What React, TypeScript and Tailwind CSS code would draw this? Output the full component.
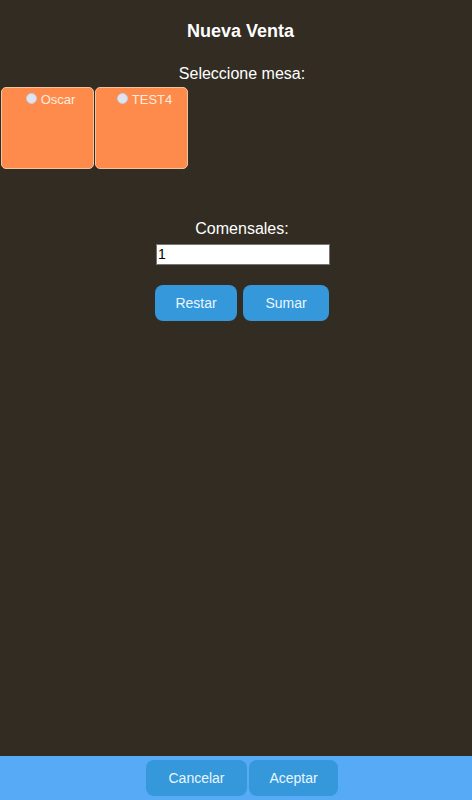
import { useState } from "react";

const mesas = ["Oscar", "TEST4"];

const App = () => {
	const [comensales, setComensales] = useState(1);

	return (
		<div className="flex h-[800px] w-full flex-col bg-[#322c23] font-['Liberation_Sans',Arial,sans-serif] text-white">
			<main className="flex flex-1 flex-col">
				<h1 className="mt-[20px] pl-[9px] text-center text-[18px] font-bold leading-[22px]">
					Nueva Venta
				</h1>
				<p className="mt-[22px] pl-[12px] text-center text-[16px] leading-[20px]">
					Seleccione mesa:
				</p>
				<div className="mt-[3px] flex gap-[1px] pl-[1px]">
					{mesas.map((m) => (
						<label
							key={m}
							className="flex h-[82px] w-[93px] cursor-pointer justify-center rounded-[5px] border border-[#f3c49c] bg-[#fe8a4b] pl-[6px] pt-[5px]"
						>
							<span className="flex h-[14px] items-center gap-[4px] text-[13px] leading-[14px] text-[#fdeede]">
								<span className="mb-[3px] h-[11px] w-[11px] rounded-full border border-[#c9cdd8] bg-[#dfe3ef]" />
								{m}
							</span>
						</label>
					))}
				</div>
				<p className="mt-[50px] pl-[12px] text-center text-[16px] leading-[20px]">
					Comensales:
				</p>
				<div className="mt-[5px] flex justify-center pl-[14px]">
					<input
						type="text"
						value={comensales}
						readOnly
						className="h-[21px] w-[174px] border border-[#767676] bg-white px-[1px] text-[14px] text-black outline-none"
					/>
				</div>
				<div className="mt-[20px] flex justify-center gap-[6px] pl-[12px]">
					<button
						onClick={() => setComensales((c) => Math.max(1, c - 1))}
						className="h-[36px] w-[82px] rounded-[8px] bg-[#3498db] text-[14px] text-[#eaf6ff]"
					>
						Restar
					</button>
					<button
						onClick={() => setComensales((c) => c + 1)}
						className="h-[36px] w-[86px] rounded-[8px] bg-[#3498db] text-[14px] text-[#eaf6ff]"
					>
						Sumar
					</button>
				</div>
			</main>
			<footer className="flex h-[44px] items-center justify-center gap-[2px] bg-[#56aaf6] pl-[12px]">
				<button className="h-[36px] w-[101px] rounded-[8px] bg-[#3498db] text-[14px] text-[#eaf6ff]">
					Cancelar
				</button>
				<button className="h-[36px] w-[89px] rounded-[8px] bg-[#3498db] text-[14px] text-[#eaf6ff]">
					Aceptar
				</button>
			</footer>
		</div>
	);
};

export default App;
